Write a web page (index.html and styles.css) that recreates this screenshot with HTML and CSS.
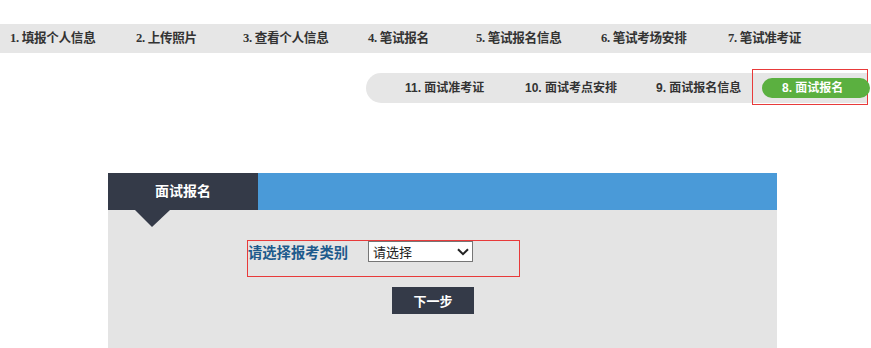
FILE: index.html
```html
<!DOCTYPE html>
<html lang="zh-CN">
<head>
<meta charset="utf-8">
<title>面试报名</title>
<link rel="stylesheet" href="styles.css">
</head>
<body>
<div class="topnav">
  <span class="step">1. 填报个人信息</span>
  <span class="step">2. 上传照片</span>
  <span class="step">3. 查看个人信息</span>
  <span class="step">4. 笔试报名</span>
  <span class="step">5. 笔试报名信息</span>
  <span class="step">6. 笔试考场安排</span>
  <span class="step">7. 笔试准考证</span>
</div>
<div class="subnav">
  <span class="sub w1">11. 面试准考证</span>
  <span class="sub w2">10. 面试考点安排</span>
  <span class="sub w3">9. 面试报名信息</span>
  <span class="current-box"><span class="pill">8. 面试报名</span></span>
</div>
<div class="panel">
  <div class="panel-head">
    <div class="tab">面试报名</div>
  </div>
  <div class="panel-body">
    <div class="form-box">
      <label class="form-label" for="lb">请选择报考类别</label>
      <div class="select-wrap">
        <select id="lb" class="select">
          <option>请选择</option>
        </select>
        <svg class="chev" width="12" height="8" viewBox="0 0 12 8"><path d="M1 1.2 L6 6.2 L11 1.2" fill="none" stroke="#222" stroke-width="2"/></svg>
      </div>
    </div>
    <button class="next-btn" type="button">下一步</button>
  </div>
</div>
</body>
</html>
```

FILE: styles.css
```css
html, body {
  margin: 0;
  padding: 0;
  background: #fff;
}
body {
  font-family: "Liberation Sans", "Noto Sans CJK SC", sans-serif;
  color: #333;
}
.topnav {
  margin-top: 24px;
  height: 29px;
  background: #e6e6e6;
  display: grid;
  grid-template-columns: 126px 107px 125px 108px 125px 127px auto;
  padding-left: 10px;
  align-items: center;
}
.step {
  font-family: "Liberation Serif", "Noto Sans CJK SC", serif;
  font-weight: bold;
  font-size: 12.6px;
  line-height: 29px;
  color: #333;
  white-space: nowrap;
  letter-spacing: -0.3px;
}
.subnav {
  margin: 20px 3px 0 366px;
  height: 30px;
  background: #e6e6e6;
  border-radius: 15px 0 0 15px;
  display: flex;
  align-items: center;
  padding-left: 39px;
}
.sub {
  font-family: "Liberation Sans", "Noto Sans CJK SC", sans-serif;
  font-weight: bold;
  font-size: 12px;
  line-height: 30px;
  color: #333;
  white-space: nowrap;
}
.w1 { width: 120px; }
.w2 { width: 131px; }
.w3 { width: 96px; }
.current-box {
  box-sizing: border-box;
  width: 116px;
  height: 36px;
  margin-top: -3px;
  border: 1px solid #e83a3a;
  display: flex;
  align-items: center;
  padding-left: 9px;
}
.pill {
  flex: none;
  width: 108px;
  height: 20px;
  margin-top: 2px;
  border-radius: 10px;
  background: #5bb040;
  color: #fff;
  font-weight: bold;
  font-size: 12px;
  line-height: 20px;
  padding-left: 20px;
  box-sizing: border-box;
  white-space: nowrap;
}
.panel {
  margin: 70px 0 0 108px;
  width: 669px;
  background: #e4e4e4;
  height: 175px;
}
.panel-head {
  height: 37px;
  background: #4a9ad8;
  display: flex;
}
.tab {
  width: 150px;
  height: 37px;
  background: #343a48;
  color: #fff;
  font-weight: bold;
  font-size: 14px;
  line-height: 37px;
  text-align: center;
  position: relative;
}
.tab::after {
  content: "";
  position: absolute;
  left: 27px;
  top: 37px;
  border-left: 17px solid transparent;
  border-right: 18px solid transparent;
  border-top: 17px solid #343a48;
}
.panel-body {
  padding-top: 30px;
  padding-left: 139px;
}
.form-box {
  box-sizing: border-box;
  width: 273px;
  height: 37px;
  border: 1px solid #e83a3a;
  display: flex;
  align-items: flex-start;
}
.form-label {
  width: 120px;
  font-weight: bold;
  font-size: 14.3px;
  line-height: 20px;
  color: #1d5a8c;
  padding-top: 2px;
}
.select-wrap {
  position: relative;
  width: 105px;
  height: 21px;
}
.select {
  -webkit-appearance: none;
  appearance: none;
  box-sizing: border-box;
  width: 105px;
  height: 21px;
  border: 1px solid #767676;
  border-radius: 0;
  background: #fff;
  font-family: "Noto Sans CJK SC", sans-serif;
  font-size: 13px;
  line-height: 19px;
  padding: 0 0 0 4px;
  color: #222;
  margin: 0;
}
.chev {
  position: absolute;
  right: 4px;
  top: 7px;
  pointer-events: none;
}
.next-btn {
  display: block;
  margin: 10px 0 0 145px;
  width: 82px;
  height: 27px;
  border: 0;
  background: #343a48;
  color: #fff;
  font-family: "Liberation Sans", "Noto Sans CJK SC", sans-serif;
  font-weight: bold;
  font-size: 13px;
  padding: 0;
}
```
